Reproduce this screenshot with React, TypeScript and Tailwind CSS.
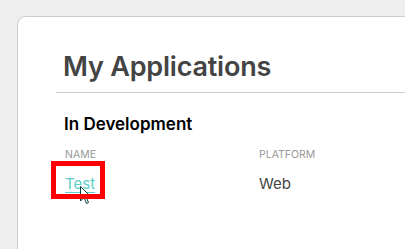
export default function App() {
  return (
    <div className="w-[405px] h-[249px] overflow-hidden bg-[#eeeeee] pl-[17px] pt-[16px] font-['Inter',sans-serif]">
      <div className="h-full bg-white border-l border-t border-[#cccccc] rounded-tl-[9px] pl-[38px] pt-[33px]">
        <div className="border-b border-[#cccccc] pl-[7px] pb-[8px]">
          <h1 className="text-[27px] leading-[34px] font-semibold text-[#444444] tracking-[-0.2px]">My Applications</h1>
        </div>
        <div className="pl-[8px] pt-[20px]">
          <h2 className="text-[17px] leading-[22px] font-semibold text-black">In Development</h2>
          <div className="mt-[13px] flex text-[10.5px] leading-[14px] text-[#999999] uppercase">
            <div className="w-[195px] pl-[1px]">Name</div>
            <div>Platform</div>
          </div>
          <div className="mt-[12px] flex text-[15px] leading-[20px]">
            <div className="w-[195px] pl-[1px]">
              <span className="relative inline-block">
                <a className="text-[#5dcfc8] underline underline-offset-[3px] decoration-[1px]">Test</a>
                <svg className="absolute left-[15px] top-[12px]" width="13" height="20" viewBox="0 0 13 20">
                  <path d="M0.5 0.5 L0.5 15 L4 11.5 L6.5 17.5 L8.5 16.5 L6 10.8 L11 10.8 Z" fill="white" stroke="#0b3a3a" strokeWidth="1" strokeLinejoin="miter" />
                </svg>
                <span className="absolute -left-[14px] -top-[13px] w-[54px] h-[38px] border-[5px] border-[#ff0000]"></span>
              </span>
            </div>
            <div className="text-[#444444]">Web</div>
          </div>
        </div>
      </div>
    </div>
  );
}
